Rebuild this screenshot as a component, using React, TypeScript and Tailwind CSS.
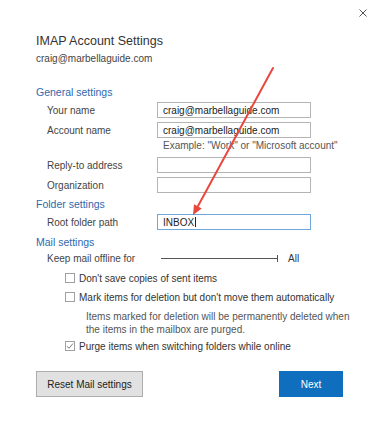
import React from "react";

const font = { fontFamily: '"Liberation Sans", Arial, sans-serif' };

function Field({ label, value, focused }: { label: string; value?: string; focused?: boolean }) {
  return (
    <div className="flex h-[20px] items-center">
      <div className="w-[121px] pl-[11px] text-[10px] text-[#444]">{label}</div>
      <div
        className={
          "flex h-[16px] w-[154px] items-center border px-[5px] text-[10px] text-[#222] " +
          (focused ? "border-[#6fa7dc]" : "border-[#b4b4b4]")
        }
      >
        {value}
        {focused && <span className="ml-[1px] inline-block h-[10px] w-px bg-[#222]" />}
      </div>
    </div>
  );
}

function Check({ label, checked }: { label: string; checked?: boolean }) {
  return (
    <div className="flex h-[16px] items-center pl-[29px]">
      <div className="flex h-[10px] w-[10px] items-center justify-center border border-[#a0a0a0] bg-white">
        {checked && (
          <svg width="8" height="8" viewBox="0 0 8 8">
            <path d="M1 4.2 L3 6.3 L7 1.5" fill="none" stroke="#6b6b6b" strokeWidth="0.9" />
          </svg>
        )}
      </div>
      <div className="ml-[4px] text-[10px] text-[#333]">{label}</div>
    </div>
  );
}

export default function App() {
  return (
    <div className="relative h-[433px] w-[380px] overflow-hidden bg-white" style={font}>
      <div className="flex h-[25px] items-center justify-end pr-[13px]">
        <svg width="8" height="8" viewBox="0 0 8 8">
          <path d="M0.5 0.5 L7.5 7.5 M7.5 0.5 L0.5 7.5" stroke="#555" strokeWidth="1" />
        </svg>
      </div>
      <div className="flex flex-col pl-[36px]">
        <div className="mt-[8px] h-[16px] text-[12.5px] leading-[16px] text-[#333]">IMAP Account Settings</div>
        <div className="mt-[3px] h-[14px] text-[10px] leading-[14px] text-[#444]">craig@marbellaguide.com</div>

        <div className="mt-[19px] h-[14px] text-[10.5px] leading-[14px] text-[#2f69ad]">General settings</div>
        <div className="mt-[1px]">
          <Field label="Your name" value="craig@marbellaguide.com" />
          <Field label="Account name" value="craig@marbellaguide.com" />
        </div>
        <div className="h-[12px] pl-[127px] text-[10px] leading-[12px] text-[#555]">
          Example: "Work" or "Microsoft account"
        </div>
        <div className="mt-[3px]">
          <Field label="Reply-to address" />
          <Field label="Organization" />
        </div>

        <div className="mt-[2px] h-[14px] text-[10.5px] leading-[14px] text-[#2f69ad]">Folder settings</div>
        <div className="mt-[1px]">
          <Field label="Root folder path" value="INBOX" focused />
        </div>

        <div className="mt-[3px] h-[14px] text-[10.5px] leading-[14px] text-[#2f69ad]">Mail settings</div>
        <div className="mt-[1px] flex h-[16px] items-center">
          <div className="w-[125px] pl-[11px] text-[10px] text-[#444]">Keep mail offline for</div>
          <div className="flex items-center">
            <div className="h-px w-[116px] bg-[#555]" />
            <div className="h-[7px] w-px bg-[#555]" />
          </div>
          <div className="ml-[10px] text-[10px] text-[#333]">All</div>
        </div>

        <div className="mt-[4px]">
          <Check label="Don't save copies of sent items" />
        </div>
        <div className="mt-[3px]">
          <Check label="Mark items for deletion but don't move them automatically" />
        </div>
        <div className="mt-[5px] whitespace-nowrap pl-[50px] text-[10px] leading-[13px] text-[#555]">
          Items marked for deletion will be permanently deleted when
          <br />
          the items in the mailbox are purged.
        </div>
        <div className="mt-[2px]">
          <Check label="Purge items when switching folders while online" checked />
        </div>

        <div className="mt-[17px] flex w-[307px] justify-between">
          <div className="flex h-[26px] w-[107px] items-center justify-center border border-[#adadad] bg-[#e1e1e1] text-[10px] text-[#222]">
            Reset Mail settings
          </div>
          <div className="flex h-[26px] w-[64px] items-center justify-center bg-[#106ebe] text-[10px] text-white">
            Next
          </div>
        </div>
      </div>

      <svg className="pointer-events-none absolute left-0 top-0" width="380" height="433" viewBox="0 0 380 433">
        <line x1="273" y1="68" x2="198" y2="206" stroke="#e9483f" strokeWidth="2" strokeLinecap="round" />
        <polygon points="193,215 201.8,208.4 194,204.2" fill="#e9483f" />
      </svg>
    </div>
  );
}
